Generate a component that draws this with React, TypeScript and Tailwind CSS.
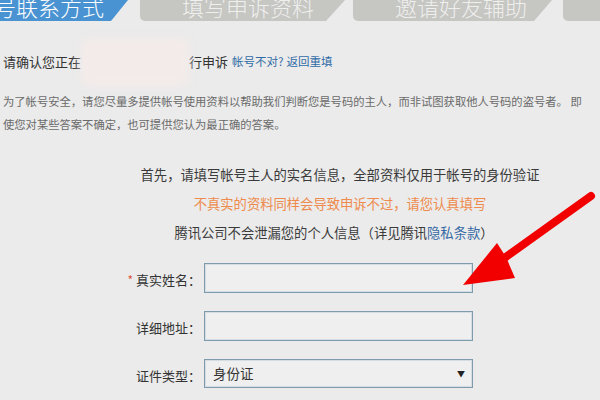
import React from "react";

const font = { fontFamily: '"Noto Sans CJK SC", "Noto Sans", sans-serif' };

export default function App() {
  return (
    <div
      className="relative w-[600px] h-[400px] overflow-hidden bg-[#ebebeb] text-[#333]"
      style={font}
    >
      {/* tabs */}
      <div className="flex h-[21px] overflow-hidden">
        <div className="w-[128px] shrink-0 bg-[#4a93d3] flex items-end justify-end pr-[24px] overflow-hidden [clip-path:polygon(0_0,100%_0,calc(100%_-_17px)_100%,0_100%)]">
          <span className="text-[22px] leading-none mb-[-1px] whitespace-nowrap text-white font-light translate-y-[-5px]">号联系方式</span>
        </div>
        <div className="ml-[12px] w-[205px] shrink-0 bg-[#c6c6c3] rounded-bl-[5px] flex items-end pl-[42px] overflow-hidden [clip-path:polygon(0_0,100%_0,calc(100%_-_19px)_100%,0_100%)]">
          <span className="text-[22px] leading-none mb-[-1px] whitespace-nowrap text-[#efefed] font-light translate-y-[-5px]">填写申诉资料</span>
        </div>
        <div className="ml-[8px] w-[199px] shrink-0 bg-[#c6c6c3] rounded-bl-[5px] flex items-end pl-[42px] overflow-hidden [clip-path:polygon(0_0,100%_0,calc(100%_-_18px)_100%,0_100%)]">
          <span className="text-[22px] leading-none mb-[-1px] whitespace-nowrap text-[#efefed] font-light translate-y-[-5px]">邀请好友辅助</span>
        </div>
        <div className="ml-[11px] w-[200px] shrink-0 bg-[#c6c6c3] rounded-bl-[5px]" />
      </div>

      {/* confirm row */}
      <div className="mt-[26px] h-[30px] flex items-center pl-[3px] whitespace-nowrap">
        <span className="text-[13px]">请确认您正在</span>
        <span className="inline-block w-[108px] h-[48px] -my-[9px] bg-[#f3ebe9] blur-[5px] rounded-[6px]" />
        <span className="text-[13px]">行申诉</span>
        <span className="ml-[4px] text-[11.5px] text-[#2f6aa6]">帐号不对?</span>
        <span className="ml-[3px] text-[11.5px] text-[#2f6aa6]">返回重填</span>
      </div>

      {/* paragraph */}
      <p className="mt-[13px] pl-[3px] text-[11.3px] leading-[23px] text-[#6a6a6a] whitespace-nowrap">
        为了帐号安全，请您尽量多提供帐号使用资料以帮助我们判断您是号码的主人，而非试图获取他人号码的盗号者。 即
        <br />
        使您对某些答案不确定，也可提供您认为最正确的答案。
      </p>

      {/* center notes */}
      <div className="mt-[24px] ml-[80px] w-[520px] text-center text-[13.3px] leading-[29px]">
        <div className="text-[#3a3a3a]">首先，请填写帐号主人的实名信息，全部资料仅用于帐号的身份验证</div>
        <div className="text-[#ee8a4c]">不真实的资料同样会导致申诉不过，请您认真填写</div>
        <div className="text-[#3a3a3a] pr-[12px]">
          腾讯公司不会泄漏您的个人信息（详见腾讯<span className="text-[#3569a3]">隐私条款</span>）
        </div>
      </div>

      {/* form */}
      <div className="mt-[16px] flex flex-col gap-[18px]">
        <div className="flex items-center h-[30px]">
          <div className="w-[204px] pr-[3px] text-right text-[13px] translate-y-[2px]">
            <span className="text-[#e0533f] text-[12px] mr-[3px]">*</span>真实姓名：
          </div>
          <div className="w-[269px] h-[30px] border border-[#7f9caf] shadow-[inset_0_0_0_1px_#d3dde3] bg-[#efefef]" />
        </div>
        <div className="flex items-center h-[30px]">
          <div className="w-[204px] pr-[3px] text-right text-[13px] translate-y-[2px]">详细地址：</div>
          <div className="w-[269px] h-[30px] border border-[#7f9caf] shadow-[inset_0_0_0_1px_#d3dde3] bg-[#efefef]" />
        </div>
        <div className="flex items-center h-[29px]">
          <div className="w-[204px] pr-[3px] text-right text-[13px] translate-y-[2px]">证件类型：</div>
          <div className="w-[269px] h-[29px] border border-[#7f9caf] shadow-[inset_0_0_0_1px_#d3dde3] bg-[#efefef] flex items-center pl-[8px] pr-[7px]">
            <span className="text-[13.5px] text-[#333] flex-1">身份证</span>
            <span className="text-[8px] text-[#222]">▼</span>
          </div>
        </div>
      </div>

      {/* red annotation arrow */}
      <svg
        className="absolute inset-0 pointer-events-none"
        width="600"
        height="400"
        viewBox="0 0 600 400"
      >
        <line x1="591" y1="196" x2="503" y2="259" stroke="#f20000" strokeWidth="8" strokeLinecap="round" />
        <polygon points="463,285 497,243 506,257 515,278" fill="#f20000" />
      </svg>
    </div>
  );
}
